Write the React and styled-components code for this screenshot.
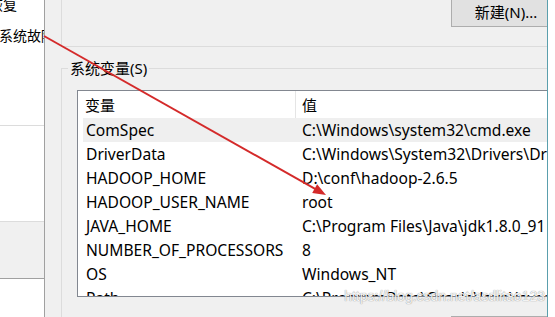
import React from 'react';
import styled, { createGlobalStyle } from 'styled-components';

const Global = createGlobalStyle`
  html, body { margin: 0; padding: 0; background: #ffffff; }
  body {
    font-family: "Noto Sans", "Noto Sans CJK SC", sans-serif;
    color: #000;
  }
  * { box-sizing: border-box; }
`;

const Screen = styled.div`
  width: 555px;
  height: 317px;
  display: flex;
  overflow: hidden;
  background: #ffffff;
`;

const Window = styled.div`
  position: relative;
  width: 548px;
  height: 317px;
  flex-shrink: 0;
  display: flex;
  overflow: hidden;
  background: #f0f0f0;
  border-right: 1px solid #5a9fad;
`;

const LeftPanel = styled.div`
  width: 45px;
  flex-shrink: 0;
  display: flex;
  flex-direction: column;
  border-right: 1px solid #a0a0a0;
  overflow: hidden;
`;

const PanelSection = styled.div`
  height: ${(p) => p.$h}px;
  flex: ${(p) => (p.$h ? '0 0 auto' : '1')};
  background: ${(p) => (p.$grey ? '#f0f0f0' : '#ffffff')};
  border-bottom: ${(p) => (p.$line ? `1px solid ${p.$line}` : 'none')};
  display: flex;
  flex-direction: column;
  overflow: hidden;
`;

const CutLabel = styled.div`
  font-family: "Noto Sans CJK SC", sans-serif;
  font-size: 14px;
  line-height: 20px;
  white-space: nowrap;
  margin-top: ${(p) => p.$top}px;
  margin-left: ${(p) => p.$indent}px;
`;

const Content = styled.div`
  flex: 1;
  min-width: 0;
  display: flex;
  flex-direction: column;
  padding-left: 16px;
  overflow: hidden;
`;

const UserGroup = styled.div`
  height: 47px;
  flex-shrink: 0;
  display: flex;
  align-items: flex-start;
  border-left: 1px solid #dcdcdc;
  border-bottom: 1px solid #dcdcdc;
`;

const WinButton = styled.div`
  width: 110px;
  height: 31px;
  flex-shrink: 0;
  margin-left: auto;
  margin-right: -14px;
  margin-top: ${(p) => p.$top || 0}px;
  display: flex;
  align-items: center;
  justify-content: center;
  background: #e1e1e1;
  border: 1px solid #adadad;
  font-size: 15px;
  line-height: 20px;
  padding-bottom: 4px;
  padding-top: 4px;
`;

const SystemGroup = styled.div`
  flex: 1;
  margin-top: 21px;
  display: flex;
  flex-direction: column;
  border-top: 1px solid #dcdcdc;
  border-left: 1px solid #dcdcdc;
`;

const GroupLabel = styled.div`
  align-self: flex-start;
  margin: -11px 0 0 6px;
  padding: 0 2px;
  background: #f0f0f0;
  font-size: 15px;
  line-height: 20px;
`;

const ListBox = styled.div`
  height: 207px;
  flex-shrink: 0;
  margin: 12px -20px 0 15px;
  background: #ffffff;
  border: 1px solid #828790;
  overflow: hidden;
  display: flex;
  flex-direction: column;
`;

const HeaderRow = styled.div`
  height: 27px;
  flex-shrink: 0;
  display: grid;
  grid-template-columns: 217px 1fr;
`;

const HeaderCell = styled.div`
  display: flex;
  align-items: center;
  padding-left: ${(p) => (p.$sep ? 6 : 7)}px;
  border-left: ${(p) => (p.$sep ? '1px solid #e5e5e5' : 'none')};
  font-family: "Noto Sans CJK SC", sans-serif;
  font-size: 15px;
  padding-bottom: 1px;
`;

const Row = styled.div`
  height: 24px;
  flex-shrink: 0;
  margin-left: 5px;
  display: grid;
  grid-template-columns: 212px 1fr;
  align-items: center;
  background: ${(p) => (p.$selected ? '#efefef' : 'transparent')};
  font-size: 15.6px;
  white-space: nowrap;
`;

const Cell = styled.div`
  padding-left: ${(p) => (p.$value ? 7 : 3)}px;
  overflow: hidden;
`;

const ButtonRow = styled.div`
  margin-top: 19px;
  display: flex;
`;

const Overlay = styled.svg`
  position: absolute;
  left: 0;
  top: 0;
  pointer-events: none;
`;

const Watermark = styled.div`
  position: absolute;
  right: 2px;
  top: 287px;
  font-family: "Liberation Sans", Arial, sans-serif;
  font-size: 14px;
  line-height: 18px;
  color: rgba(255, 255, 255, 0.92);
  text-shadow: 0 0 1px rgba(0, 0, 0, 0.35), 0 0 1px rgba(0, 0, 0, 0.25);
  white-space: nowrap;
`;

const rows = [
  ['ComSpec', 'C:\\Windows\\system32\\cmd.exe', true],
  ['DriverData', 'C:\\Windows\\System32\\Drivers\\DriverData'],
  ['HADOOP_HOME', 'D:\\conf\\hadoop-2.6.5'],
  ['HADOOP_USER_NAME', 'root'],
  ['JAVA_HOME', 'C:\\Program Files\\Java\\jdk1.8.0_91'],
  ['NUMBER_OF_PROCESSORS', '8'],
  ['OS', 'Windows_NT'],
  ['Path', 'C:\\ProgramData\\Oracle\\Java\\javapath;C:\\Windows\\system32'],
];

function Arrow() {
  const sx = 44, sy = 36, tx = 326, ty = 195;
  const dx = tx - sx, dy = ty - sy;
  const len = Math.hypot(dx, dy);
  const ux = dx / len, uy = dy / len;
  const hl = 13, hw = 5;
  const bx = tx - ux * hl, by = ty - uy * hl;
  const nx = -uy, ny = ux;
  const pts = `${tx},${ty} ${bx + nx * hw},${by + ny * hw} ${bx - nx * hw},${by - ny * hw}`;
  return (
    <Overlay width="547" height="317" viewBox="0 0 547 317">
      <line x1={sx} y1={sy} x2={bx + ux} y2={by + uy} stroke="#d42a2a" strokeWidth="2" />
      <polygon points={pts} fill="#d42a2a" />
    </Overlay>
  );
}

export default function App() {
  return (
    <>
      <Global />
      <Screen>
        <Window>
          <LeftPanel>
            <PanelSection $h={126} $line="#dcdcdc">
              <CutLabel $top={-6} $indent={-11}>恢复</CutLabel>
              <CutLabel $top={11} $indent={-1}>系统故障</CutLabel>
            </PanelSection>
            <PanelSection $h={96} $line="#dcdcdc" />
            <PanelSection $h={57} $grey $line="#a0a0a0" />
            <PanelSection />
          </LeftPanel>
          <Content>
            <UserGroup>
              <WinButton $top={-4}>新建(N)...</WinButton>
            </UserGroup>
            <SystemGroup>
              <GroupLabel>系统变量(S)</GroupLabel>
              <ListBox>
                <HeaderRow>
                  <HeaderCell>变量</HeaderCell>
                  <HeaderCell $sep>值</HeaderCell>
                </HeaderRow>
                {rows.map(([name, value, sel]) => (
                  <Row key={name} $selected={sel}>
                    <Cell>{name}</Cell>
                    <Cell $value>{value}</Cell>
                  </Row>
                ))}
              </ListBox>
              <ButtonRow>
                <WinButton>新建(W)...</WinButton>
              </ButtonRow>
            </SystemGroup>
          </Content>
          <Arrow />
          <Watermark>https://blog.csdn.net/asdlitao123</Watermark>
        </Window>
      </Screen>
    </>
  );
}
